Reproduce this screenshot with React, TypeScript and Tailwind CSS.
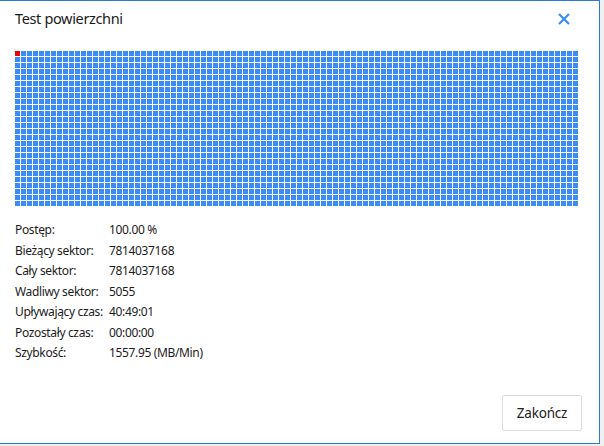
import React from "react";

const COLS = 94;
const ROWS = 26;

const rows: [string, string][] = [
  ["Postęp:", "100.00 %"],
  ["Bieżący sektor:", "7814037168"],
  ["Cały sektor:", "7814037168"],
  ["Wadliwy sektor:", "5055"],
  ["Upływający czas:", "40:49:01"],
  ["Pozostały czas:", "00:00:00"],
  ["Szybkość:", "1557.95 (MB/Min)"],
];

export default function App() {
  const cells = [];
  for (let i = 0; i < COLS * ROWS; i++) {
    cells.push(
      <div key={i} className={i === 0 ? "bg-[#f00000]" : "bg-[#3a8cf6]"} />
    );
  }
  return (
    <div className="w-[604px] h-[446px] bg-[#f0f0f0] font-['Noto_Sans','Open_Sans',sans-serif]">
      <div className="w-[600px] h-[444px] bg-white border-t border-r border-b border-[#2c7ad6] flex flex-col">
        <div className="h-[50px] flex items-start justify-between pl-[15px] pr-[29px] pt-[7px]">
          <div className="text-[14.5px] tracking-[-0.35px] text-[#1a1a1a]">Test powierzchni</div>
          <svg width="12" height="12" viewBox="0 0 12 12" className="mt-[5px]">
            <path d="M1 1 L11 11 M11 1 L1 11" stroke="#3a8cf6" strokeWidth="2.2" />
          </svg>
        </div>
        <div className="pl-[15px]">
          <div className="grid grid-cols-[repeat(94,5px)] grid-rows-[repeat(26,5px)] gap-px">
            {cells}
          </div>
        </div>
        <div className="pl-[15px] pt-[14px] text-[12px] tracking-[-0.35px] text-[#1c1c1c]">
          {rows.map(([l, v]) => (
            <div key={l} className="flex h-[20.5px] items-center">
              <div className="w-[94px] shrink-0">{l}</div>
              <div>{v}</div>
            </div>
          ))}
        </div>
        <div className="flex-1" />
        <div className="flex justify-end pr-[17px] pb-[12px]">
          <button className="w-[80px] h-[36px] border border-[#dcdcdc] rounded-[2px] bg-white text-[13.5px] tracking-[-0.2px] text-[#222]">
            Zakończ
          </button>
        </div>
      </div>
    </div>
  );
}
